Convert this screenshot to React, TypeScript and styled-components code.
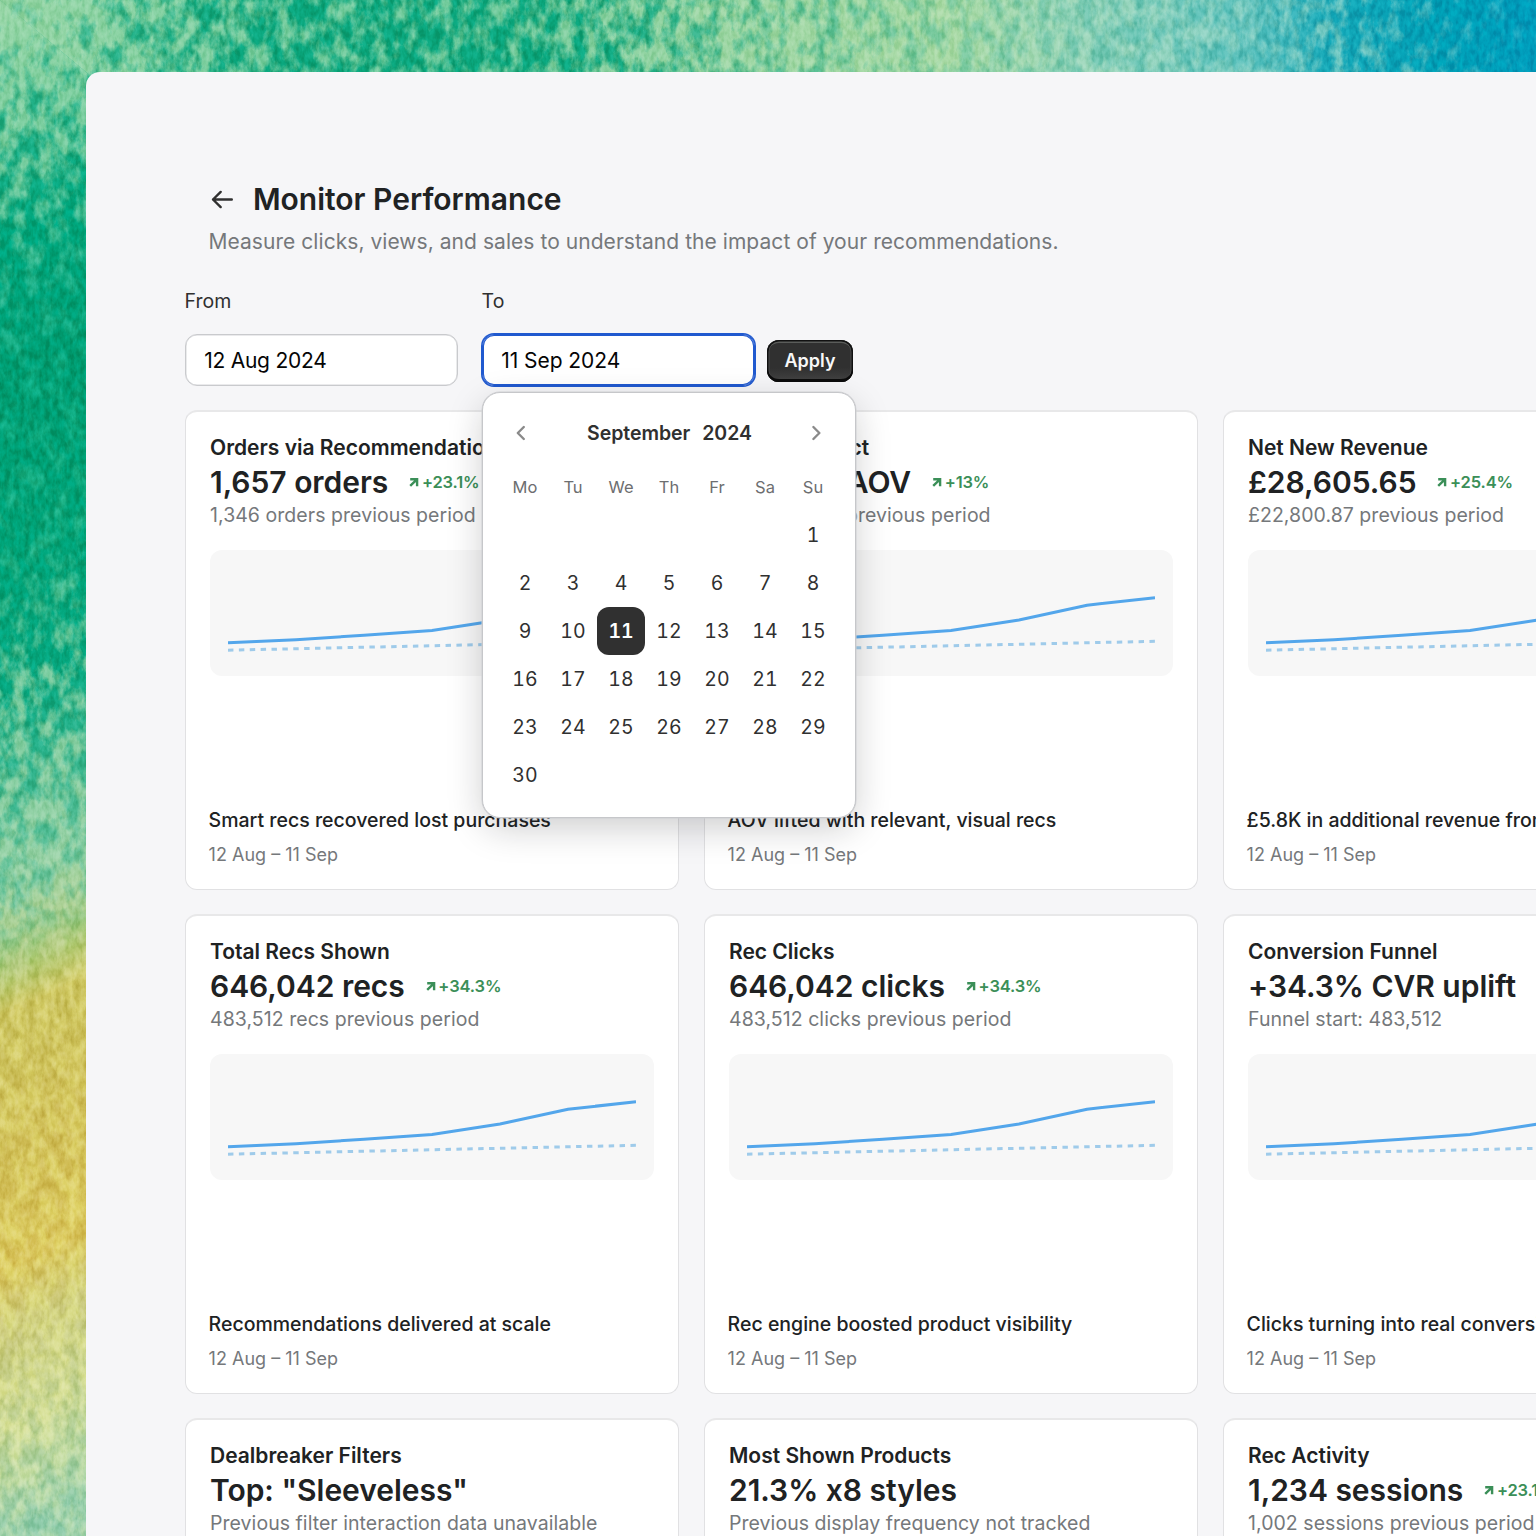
import React from "react";
import styled, { createGlobalStyle } from "styled-components";

const GlobalStyle = createGlobalStyle`
  * { box-sizing: border-box; }
  html, body { margin: 0; padding: 0; overflow: hidden; }
  body {
    font-family: Inter, "Liberation Sans", sans-serif;
    color: #202223;
    -webkit-font-smoothing: antialiased;
  }
`;

const Desktop = styled.div`
  display: grid;
  width: 1536px;
  height: 1536px;
  overflow: hidden;
  background: #05a67c;
  & > * { grid-area: 1 / 1; }
`;

const Wallpaper = styled.svg`
  display: block;
  width: 1536px;
  height: 1536px;
`;

const Grain = styled.g`
  mix-blend-mode: soft-light;
  opacity: 0.32;
`;

const Window = styled.main`
  z-index: 1;
  display: flex;
  flex-direction: column;
  width: 1700px;
  height: 2000px;
  margin: 72px 0 0 86px;
  padding: 106px 0 0 99px;
  border-radius: 14px 0 0 0;
  background: #f6f6f8;
`;

const PageHeader = styled.header`
  display: flex;
  flex-direction: column;
  padding-left: 23.5px;
`;

const TitleRow = styled.div`
  display: flex;
  align-items: center;
  gap: 14.4px;
  height: 42px;
`;

const BackButton = styled.button`
  display: flex;
  padding: 1px 0 0;
  border: 0;
  background: none;
  color: #303030;
`;

const PageTitle = styled.h1`
  margin: 0;
  font-size: 30px;
  font-weight: 600;
  line-height: 42px;
`;

const PageSubtitle = styled.p`
  margin: 7px 0 0;
  color: #75787b;
  font-size: 21px;
  letter-spacing: 0.05px;
  line-height: 30px;
`;

const FilterBar = styled.form`
  display: flex;
  align-items: flex-end;
  margin-top: 29px;
`;

const Field = styled.div<{ $end?: boolean }>`
  position: relative;
  display: flex;
  flex-direction: column;
  width: 273px;
  margin-right: ${(p) => (p.$end ? 12 : 24)}px;
`;

const Label = styled.label`
  margin: 0 0 18px -0.4px;
  color: #303030;
  font-size: 19.5px;
  line-height: 30px;
`;

const DateInput = styled.div<{ $focused?: boolean }>`
  display: flex;
  align-items: center;
  height: 52px;
  padding: 0 18.2px;
  border: 1px solid ${(p) => (p.$focused ? "#2059cf" : "#c9cacd")};
  border-radius: 12px;
  background: #fff;
  box-shadow: ${(p) =>
    p.$focused
      ? "0 0 0 1px #2059cf, inset 0 0 0 1px #2059cf"
      : "inset 0 0 0 0.5px #d5d6d9"};
  color: #050505;
  font-size: 21px;
  letter-spacing: ${(p) => (p.$focused ? -0.05 : -0.25)}px;
`;

const ApplyButton = styled.button`
  width: 86px;
  height: 42px;
  margin-bottom: 4px;
  padding: 0 0 1px;
  border: 0;
  border-radius: 12px;
  background: linear-gradient(#303030 65%, #444);
  box-shadow:
    inset 0 -3px 0 #0c0c0c,
    inset 0 0 0 1.5px #111,
    inset 0 3px 0 #5a5c5a,
    inset 2.5px 0 0 #4a4a4a,
    inset -2.5px 0 0 #4a4a4a;
  color: #f8f8f8;
  font: 600 18px Inter, sans-serif;
`;

const Calendar = styled.section`
  position: absolute;
  z-index: 5;
  top: 106px;
  left: 0;
  width: 374px;
  height: 426px;
  padding: 18px;
  border: 1px solid #c6c7ca;
  border-radius: 18px;
  background: #fff;
  box-shadow: 0 0 0 0.5px #d0d1d4, 0 11px 36px -2px rgba(20, 20, 24, 0.22);
`;

const CalendarHeader = styled.div`
  display: flex;
  align-items: center;
  justify-content: space-between;
  height: 44px;
  margin-bottom: 8px;
`;

const StepButton = styled.button`
  display: flex;
  align-items: center;
  justify-content: center;
  width: 40px;
  height: 40px;
  padding: 0;
  border: 0;
  background: none;
  color: #8a8a8a;
`;

const MonthTitle = styled.div`
  display: flex;
  gap: 12px;
  padding-left: 1px;
  color: #303030;
  font-size: 19.5px;
  font-weight: 600;
  letter-spacing: -0.05px;
`;

const CalendarGrid = styled.div`
  display: grid;
  grid-template-columns: repeat(7, 48px);
  grid-auto-rows: 48px;
`;

const Weekday = styled.span`
  display: flex;
  align-items: center;
  justify-content: center;
  color: #6d6e70;
  font-size: 16.5px;
`;

const Day = styled.button<{ $selected?: boolean; $first?: boolean }>`
  grid-column-start: ${(p) => (p.$first ? 7 : "auto")};
  padding: 0;
  border: 0;
  border-radius: 12px;
  background: ${(p) => (p.$selected ? "#303030" : "none")};
  color: ${(p) => (p.$selected ? "#fff" : "#303030")};
  font: ${(p) => (p.$selected ? 600 : 400)} 19.5px Inter, sans-serif;
  font-variant-numeric: tabular-nums;
`;

const CardGrid = styled.section`
  display: grid;
  grid-template-columns: repeat(3, 494px);
  grid-auto-rows: 480px;
  gap: 24px 25px;
  margin-top: 24px;
`;

const Card = styled.article`
  display: flex;
  flex-direction: column;
  padding: 21px 24px 22px;
  border: 1px solid #e1e1e3;
  border-top: 2px solid #e8e8e9;
  border-radius: 12px;
  background: #fff;
  white-space: nowrap;
  overflow: hidden;
`;

const CardTitle = styled.h2`
  margin: 0;
  font-size: 21px;
  font-weight: 600;
  line-height: 30px;
`;

const ValueRow = styled.div`
  display: flex;
  align-items: center;
  gap: 20px;
  height: 38px;
`;

const Value = styled.span`
  font-size: 30px;
  font-weight: 600;
  letter-spacing: -0.03px;
  line-height: 38px;
`;

const Trend = styled.span`
  display: flex;
  align-items: center;
  gap: 1.6px;
  color: #3b8f58;
  font-size: 16.5px;
  font-weight: 600;
  letter-spacing: -0.15px;
`;

const Previous = styled.p`
  margin: -1px 0 20px;
  color: #75787b;
  font-size: 19.5px;
  letter-spacing: 0.05px;
  line-height: 30px;
`;

const ChartPanel = styled.div`
  flex: none;
  height: 126px;
  padding: 0 18px;
  border-radius: 12px;
  background: #f7f7f7;
`;

const Plot = styled.svg`
  display: block;
  width: 408px;
  height: 126px;
`;

const CardFooter = styled.footer`
  display: flex;
  flex-direction: column;
  gap: 8px;
  margin: auto 0 0 -1.4px;
`;

const Insight = styled.span`
  font-size: 19.5px;
  font-weight: 500;
  line-height: 30px;
`;

const Period = styled.span`
  color: #75787b;
  font-size: 18px;
  line-height: 24px;
`;

type Metric = {
  title: string;
  value: string;
  trend?: string;
  previous: string;
  insight: string;
};

const metrics: Metric[] = [
  { title: "Orders via Recommendations", value: "1,657 orders", trend: "+23.1%", previous: "1,346 orders previous period", insight: "Smart recs recovered lost purchases" },
  { title: "Spend Impact", value: "+£17.37 AOV", trend: "+13%", previous: "£88.66 AOV previous period", insight: "AOV lifted with relevant, visual recs" },
  { title: "Net New Revenue", value: "£28,605.65", trend: "+25.4%", previous: "£22,800.87 previous period", insight: "£5.8K in additional revenue from recs" },
  { title: "Total Recs Shown", value: "646,042 recs", trend: "+34.3%", previous: "483,512 recs previous period", insight: "Recommendations delivered at scale" },
  { title: "Rec Clicks", value: "646,042 clicks", trend: "+34.3%", previous: "483,512 clicks previous period", insight: "Rec engine boosted product visibility" },
  { title: "Conversion Funnel", value: "+34.3% CVR uplift", previous: "Funnel start: 483,512", insight: "Clicks turning into real conversions" },
  { title: "Dealbreaker Filters", value: 'Top: "Sleeveless"', previous: "Previous filter interaction data unavailable", insight: "Filters shoppers care about" },
  { title: "Most Shown Products", value: "21.3% x8 styles", previous: "Previous display frequency not tracked", insight: "Most visible styles" },
  { title: "Rec Activity", value: "1,234 sessions", trend: "+23.1%", previous: "1,002 sessions previous period", insight: "Sessions with recommendations" },
];

const weekdays = ["Mo", "Tu", "We", "Th", "Fr", "Sa", "Su"];
const days = Array.from({ length: 30 }, (_, i) => i + 1);

type Stop = [number, string];
const Stops = ({ of, length = 1536 }: { of: Stop[]; length?: number }) => (
  <>
    {of.map(([at, color]) => (
      <stop key={at} offset={at / length} stopColor={color} />
    ))}
  </>
);

const gray = (v: number) => {
  const c = Math.round(v * 255);
  return `rgb(${c},${c},${c})`;
};
const coverage = (list: [number, number][]): Stop[] => list.map(([at, v]) => [at, gray(v)]);

const topBase: Stop[] = [[0, "#6ac69e"], [120, "#22b086"], [240, "#0aa67c"], [600, "#0aa67c"], [760, "#48b98d"], [950, "#78c99c"], [1080, "#70c6ae"], [1250, "#50bcb8"], [1330, "#12a6b6"], [1440, "#009fb6"], [1536, "#009cbc"]];
const topPaint: Stop[] = [[0, "#98d6a6"], [300, "#74cc9e"], [500, "#74cc9e"], [700, "#9cd6a4"], [950, "#aadaa6"], [1080, "#a0d8bc"], [1250, "#86d0c4"], [1400, "#62c3c2"], [1536, "#1aa9c4"]];
const topCover = coverage([[0, 0.82], [100, 0.66], [200, 0.5], [320, 0.38], [470, 0.38], [600, 0.48], [700, 0.6], [850, 0.6], [1000, 0.55], [1200, 0.5], [1300, 0.42], [1420, 0.24], [1536, 0.15]]);

const sideBase: Stop[] = [[0, "#6ac69e"], [110, "#22b086"], [240, "#00a67c"], [400, "#009c70"], [560, "#00a276"], [700, "#06a880"], [820, "#3fb890"], [920, "#70c49a"], [975, "#acc86e"], [1015, "#c6be56"], [1150, "#cdba52"], [1270, "#d5bf54"], [1330, "#cac878"], [1440, "#bad090"], [1536, "#8ccaa8"]];
const sidePaint: Stop[] = [[0, "#98d6a6"], [180, "#74cc9e"], [300, "#28b78e"], [400, "#0bad82"], [560, "#22b68a"], [690, "#78cb9e"], [880, "#98d2a6"], [975, "#bcd088"], [1015, "#d8d272"], [1150, "#dbd06a"], [1270, "#e2d56c"], [1330, "#dadb88"], [1440, "#dae3a0"], [1536, "#b4dab0"]];
const sideCover = coverage([[0, 0.82], [84, 0.66], [180, 0.42], [270, 0.3], [400, 0.3], [560, 0.32], [680, 0.38], [760, 0.5], [850, 0.6], [950, 0.5], [1536, 0.5]]);

/** Watercolour wash: two pigment layers, the upper one broken up by paper grain. */
const Watercolour = () => (
  <Wallpaper viewBox="0 0 1536 1536" aria-hidden>
    <defs>
      <linearGradient id="topBase" gradientUnits="userSpaceOnUse" x1="0" y1="0" x2="1536" y2="0"><Stops of={topBase} /></linearGradient>
      <linearGradient id="topPaint" gradientUnits="userSpaceOnUse" x1="0" y1="0" x2="1536" y2="0"><Stops of={topPaint} /></linearGradient>
      <linearGradient id="topCover" gradientUnits="userSpaceOnUse" x1="0" y1="0" x2="1536" y2="0"><Stops of={topCover} /></linearGradient>
      <linearGradient id="sideBase" gradientUnits="userSpaceOnUse" x1="0" y1="0" x2="0" y2="1536" gradientTransform="skewY(-24)"><Stops of={sideBase} /></linearGradient>
      <linearGradient id="sidePaint" gradientUnits="userSpaceOnUse" x1="0" y1="0" x2="0" y2="1536" gradientTransform="skewY(-24)"><Stops of={sidePaint} /></linearGradient>
      <linearGradient id="sideCover" gradientUnits="userSpaceOnUse" x1="0" y1="0" x2="0" y2="1536"><Stops of={sideCover} /></linearGradient>
      <filter id="speckle" x="0" y="0" width="100%" height="100%" colorInterpolationFilters="sRGB">
        <feTurbulence type="fractalNoise" baseFrequency="0.075 0.045" numOctaves={5} seed={11} result="noise" />
        <feColorMatrix in="noise" type="matrix" values="1 0 0 0 0  1 0 0 0 0  1 0 0 0 0  0 0 0 0 1" result="level" />
        <feComposite in="SourceGraphic" in2="level" operator="arithmetic" k1={0} k2={1.9} k3={2.9} k4={-1.9} />
      </filter>
      <filter id="grain" x="0" y="0" width="100%" height="100%" colorInterpolationFilters="sRGB">
        <feTurbulence type="fractalNoise" baseFrequency="0.2 0.1" numOctaves={3} seed={3} />
        <feColorMatrix type="matrix" values="0 2 0 0 -0.5  0 2 0 0 -0.5  0 2 0 0 -0.5  0 0 0 0 1" />
      </filter>
      <mask id="topMask" maskUnits="userSpaceOnUse" x="0" y="0" width="1536" height="110">
        <rect width="1536" height="110" fill="url(#topCover)" filter="url(#speckle)" />
      </mask>
      <mask id="sideMask" maskUnits="userSpaceOnUse" x="0" y="0" width="110" height="1536">
        <rect width="110" height="1536" fill="url(#sideCover)" filter="url(#speckle)" />
      </mask>
      <clipPath id="sideStrip">
        <path d="M0 0 86 72 110 92V1536H0Z" />
      </clipPath>
    </defs>
    <rect width="1536" height="110" fill="url(#topBase)" />
    <rect width="1536" height="110" fill="url(#topPaint)" mask="url(#topMask)" />
    <g clipPath="url(#sideStrip)">
      <rect width="110" height="1536" fill="url(#sideBase)" />
      <rect width="110" height="1536" fill="url(#sidePaint)" mask="url(#sideMask)" />
    </g>
    <Grain>
      <rect width="1536" height="110" filter="url(#grain)" />
      <rect y="110" width="110" height="1426" filter="url(#grain)" />
    </Grain>
  </Wallpaper>
);

const BackArrow = () => (
  <svg width="30" height="30" viewBox="0 0 30 30" fill="none" stroke="currentColor" strokeWidth="2.4" strokeLinecap="round" strokeLinejoin="round">
    <path d="M22.8 14.5H4M11.7 6.9 4 14.5l7.7 7.6" />
  </svg>
);

const Chevron = ({ next }: { next?: boolean }) => (
  <svg width="20" height="20" viewBox="0 0 20 20" fill="none" stroke="currentColor" strokeWidth="2.4" strokeLinecap="round" strokeLinejoin="round">
    <path d={next ? "M6.4 4 12.4 10l-6 6" : "M12.8 4 6.8 10l6 6"} />
  </svg>
);

const TrendArrow = () => (
  <svg width="12" height="12" viewBox="0 0 12 12" fill="none" stroke="currentColor" strokeWidth="2.4">
    <path d="M2.2 3.2h6.9v7M8.7 3.6 2.2 9.8" />
  </svg>
);

const Trendline = () => (
  <Plot viewBox="0 0 408 126" fill="none">
    <path d="M0 92.7 68 89.7 136 85.3 204 80.5 272 70 340 55.2 408 47.8" stroke="#53a6eb" strokeWidth="3" />
    <path d="M0 100.2 408 91.3" stroke="#9fcbea" strokeWidth="3" strokeDasharray="5.44 5.44" />
  </Plot>
);

const MetricCard = ({ title, value, trend, previous, insight }: Metric) => (
  <Card>
    <CardTitle>{title}</CardTitle>
    <ValueRow>
      <Value>{value}</Value>
      {trend && (
        <Trend>
          <TrendArrow />
          {trend}
        </Trend>
      )}
    </ValueRow>
    <Previous>{previous}</Previous>
    <ChartPanel>
      <Trendline />
    </ChartPanel>
    <CardFooter>
      <Insight>{insight}</Insight>
      <Period>12 Aug – 11 Sep</Period>
    </CardFooter>
  </Card>
);

const DatePicker = () => (
  <Calendar>
    <CalendarHeader>
      <StepButton type="button" aria-label="Previous month"><Chevron /></StepButton>
      <MonthTitle><span>September</span><span>2024</span></MonthTitle>
      <StepButton type="button" aria-label="Next month"><Chevron next /></StepButton>
    </CalendarHeader>
    <CalendarGrid>
      {weekdays.map((d) => <Weekday key={d}>{d}</Weekday>)}
      {days.map((d) => (
        <Day key={d} type="button" $first={d === 1} $selected={d === 11}>{d}</Day>
      ))}
    </CalendarGrid>
  </Calendar>
);

export default function App() {
  return (
    <>
      <GlobalStyle />
      <Desktop>
        <Watercolour />
        <Window>
          <PageHeader>
            <TitleRow>
              <BackButton aria-label="Back"><BackArrow /></BackButton>
              <PageTitle>Monitor Performance</PageTitle>
            </TitleRow>
            <PageSubtitle>Measure clicks, views, and sales to understand the impact of your recommendations.</PageSubtitle>
          </PageHeader>
          <FilterBar>
            <Field>
              <Label>From</Label>
              <DateInput>12 Aug 2024</DateInput>
            </Field>
            <Field $end>
              <Label>To</Label>
              <DateInput $focused>11 Sep 2024</DateInput>
              <DatePicker />
            </Field>
            <ApplyButton type="button">Apply</ApplyButton>
          </FilterBar>
          <CardGrid>
            {metrics.map((m) => <MetricCard key={m.title} {...m} />)}
          </CardGrid>
        </Window>
      </Desktop>
    </>
  );
}
